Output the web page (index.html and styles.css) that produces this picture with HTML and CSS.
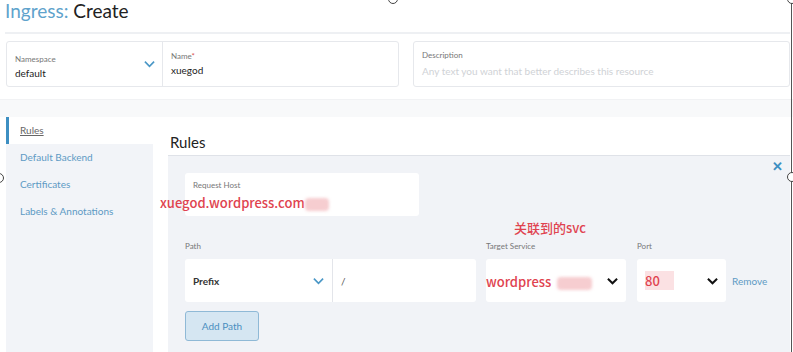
FILE: index.html
```html
<!DOCTYPE html>
<html lang="en">
<head>
  <meta charset="UTF-8" />
  <title>Ingress: Create</title>
  <link rel="stylesheet" href="styles.css">
</head>
<body>
  <div class="page">
    <h1 class="title"><span class="kind">Ingress:</span> Create</h1>

    <div class="fields">
      <div class="field-pair">
        <div class="field select">
          <label>Namespace</label>
          <div class="value">default</div>
          <svg class="chev blue" viewBox="0 0 12 8"><path d="M1 1.5l5 5 5-5" /></svg>
        </div>
        <div class="field name">
          <label>Name<span class="req">*</span></label>
          <div class="value">xuegod</div>
        </div>
      </div>
      <div class="field desc">
        <label>Description</label>
        <div class="value placeholder">Any text you want that better describes this resource</div>
      </div>
    </div>

    <div class="band"></div>

    <div class="main">
      <ul class="tabs">
        <li class="tab active"><span>Rules</span></li>
        <li class="tab">Default Backend</li>
        <li class="tab">Certificates</li>
        <li class="tab">Labels &amp; Annotations</li>
      </ul>

      <div class="content">
        <h2>Rules</h2>
        <div class="panel">
          <span class="close">✕</span>
          <div class="field host">
            <label>Request Host</label>
          </div>

          <div class="row-labels">
            <label class="col-path">Path</label>
            <label class="col-svc">Target Service</label>
            <label class="col-port">Port</label>
          </div>
          <div class="row">
            <div class="path-group">
              <div class="box prefix">
                <span>Prefix</span>
                <svg class="chev blue" viewBox="0 0 12 8"><path d="M1 1.5l5 5 5-5" /></svg>
              </div>
              <div class="box path">/</div>
            </div>
            <div class="box svc">
              <svg class="chev dark" viewBox="0 0 12 8"><path d="M1 1.5l5 5 5-5" /></svg>
            </div>
            <div class="box port">
              <span class="mark red">80</span>
              <svg class="chev dark" viewBox="0 0 12 8"><path d="M1 1.5l5 5 5-5" /></svg>
            </div>
            <a class="remove">Remove</a>
          </div>
          <button class="add-path">Add Path</button>
        </div>
      </div>
    </div>

    <!-- red notes drawn over the screenshot -->
    <div class="note host-note">xuegod.wordpress.com<span class="smudge"></span></div>
    <div class="note svc-note">关联到的svc</div>
    <div class="note svc-value">wordpress<span class="smudge wide"></span></div>

    <div class="edge"></div>
    <span class="handle h-top"></span>
    <span class="handle h-tr"></span>
    <span class="handle h-right"></span>
    <span class="handle h-left"></span>
  </div>
</body>
</html>
```

FILE: styles.css
```css
body {
  margin: 0;
  background: #fff;
  font-family: Lato, "Noto Sans", sans-serif;
  color: #222;
}
.page {
  position: relative;
  width: 793px;
  height: 352px;
  overflow: hidden;
  padding: 0 3px 0 6px;
  box-sizing: border-box;
}
.title {
  margin: 0;
  height: 32px;
  font-size: 19px;
  font-weight: 400;
  line-height: 22px;
  border-bottom: 2px solid #eef0f3;
  margin-left: -1px;
}
.kind {
  color: #5fa3cc;
}

/* top fields */
.fields {
  display: flex;
  margin-top: 7px;
}
.field-pair {
  display: flex;
  width: 393px;
  height: 46px;
  border: 1px solid #e6e8ec;
  border-radius: 3px;
  box-sizing: border-box;
}
.field {
  position: relative;
  box-sizing: border-box;
  padding: 9px 8px 0;
}
.field label {
  display: block;
  font-size: 8px;
  color: #777;
  line-height: 11px;
}
.field .value {
  font-size: 10px;
  line-height: 14px;
  margin-top: 1px;
  color: #222;
}
.field .value.placeholder {
  color: #cfd2d6;
}
.field.select {
  width: 156px;
  border-right: 1px solid #e6e8ec;
  padding-top: 12px;
}
.field.name {
  flex: 1;
  padding-top: 9px;
}
.req {
  color: #d9534f;
}
.field.desc {
  flex: 1;
  margin-left: 14px;
  height: 46px;
  border: 1px solid #e6e8ec;
  border-radius: 3px;
  padding-top: 8px;
}
.field.desc .value {
  margin-top: 3px;
}
.chev {
  width: 11px;
  height: 8px;
  fill: none;
  stroke-width: 1.8;
}
.chev.blue {
  stroke: #4a97c6;
}
.chev.dark {
  stroke: #111;
  stroke-width: 2.2;
}
.field.select .chev {
  position: absolute;
  right: 7px;
  top: 18px;
}

.band {
  height: 17px;
  margin: 12px -6px 0;
  background: #f8f9fa;
  border-top: 1px solid #f1f2f4;
}

/* tabs + content */
.main {
  display: flex;
}
.tabs {
  list-style: none;
  margin: 0;
  padding: 0;
  width: 147px;
  height: 240px;
  background: #f2f4f8;
}
.tab {
  height: 27px;
  line-height: 27px;
  padding-left: 14px;
  font-size: 10px;
  color: #5d9ac4;
}
.tab.active {
  background: #fff;
  border-left: 3px solid #3d8fc2;
  padding-left: 11px;
  color: #666;
}
.tab.active span {
  text-decoration: underline;
}
.content {
  flex: 1;
  margin-left: 15px;
}
.content h2 {
  margin: 0;
  height: 38px;
  padding-top: 15px;
  padding-left: 2px;
  box-sizing: border-box;
  font-size: 15px;
  font-weight: 400;
  line-height: 20px;
}
.panel {
  position: relative;
  background: #f1f3f7;
  border-top: 1px solid #dfe2e8;
  height: 200px;
  padding: 17px 0 0 17px;
  box-sizing: border-box;
}
.close {
  position: absolute;
  right: 7px;
  top: 2px;
  font-size: 13px;
  font-weight: 700;
  color: #3d8fc2;
}
.field.host {
  width: 234px;
  height: 43px;
  background: #fff;
  border-radius: 3px;
  padding-top: 7px;
}
.row-labels {
  display: flex;
  margin-top: 25px;
  height: 18px;
}
.row-labels label {
  font-size: 8px;
  color: #777;
}
.col-path {
  width: 301px;
}
.col-svc {
  width: 151px;
}
.row {
  display: flex;
  align-items: center;
}
.path-group {
  display: flex;
  width: 291px;
  margin-right: 10px;
}
.box {
  display: flex;
  align-items: center;
  justify-content: space-between;
  height: 43px;
  box-sizing: border-box;
  background: #fff;
  border-radius: 3px;
  padding: 0 8px;
  font-size: 10px;
}
.prefix {
  width: 148px;
  border-right: 1px solid #e3e5ea;
  border-radius: 3px 0 0 3px;
  font-weight: 700;
  color: #333;
}
.path {
  flex: 1;
  border-radius: 0 3px 3px 0;
  color: #555;
}
.svc {
  width: 140px;
  justify-content: flex-end;
  margin-right: 11px;
}
.port {
  width: 89px;
}
.remove {
  margin-left: 6px;
  font-size: 10px;
  color: #5d9ac4;
}
.add-path {
  display: block;
  margin-top: 9px;
  width: 74px;
  height: 30px;
  background: #d5e6f2;
  border: 1px solid #8fb9d6;
  border-radius: 3px;
  font-family: Lato, sans-serif;
  font-size: 10px;
  color: #4a8fc0;
}

/* red annotations */
.note {
  position: absolute;
  color: #e0434f;
  font-family: "Noto Sans CJK SC", "Noto Sans", sans-serif;
  font-size: 13px;
  font-weight: 500;
  line-height: 16px;
  white-space: nowrap;
}
.mark.red {
  color: #e0434f;
  font-family: "Noto Sans CJK SC", sans-serif;
  font-size: 13px;
  font-weight: 500;
  background: #fbe1e3;
  padding-right: 14px;
}
.smudge {
  display: inline-block;
  width: 24px;
  height: 13px;
  vertical-align: middle;
  background: #f6cdd0;
  border-radius: 4px;
  filter: blur(1.5px);
}
.smudge.wide {
  width: 35px;
  margin-left: 6px;
}
.host-note {
  left: 160px;
  top: 195px;
}
.svc-note {
  left: 514px;
  top: 220px;
}
.svc-value {
  left: 486px;
  top: 274px;
}

/* screenshot frame */
.edge {
  position: absolute;
  top: 0;
  right: 1px;
  width: 1px;
  height: 352px;
  background: #555;
}
.handle {
  position: absolute;
  width: 8px;
  height: 8px;
  border: 1.5px solid #444;
  border-radius: 50%;
  background: #fff;
}
.h-top { left: 388px; top: -6px; }
.h-tr { right: -4px; top: -6px; }
.h-right { right: -4px; top: 172px; }
.h-left { left: -6px; top: 173px; }
```
